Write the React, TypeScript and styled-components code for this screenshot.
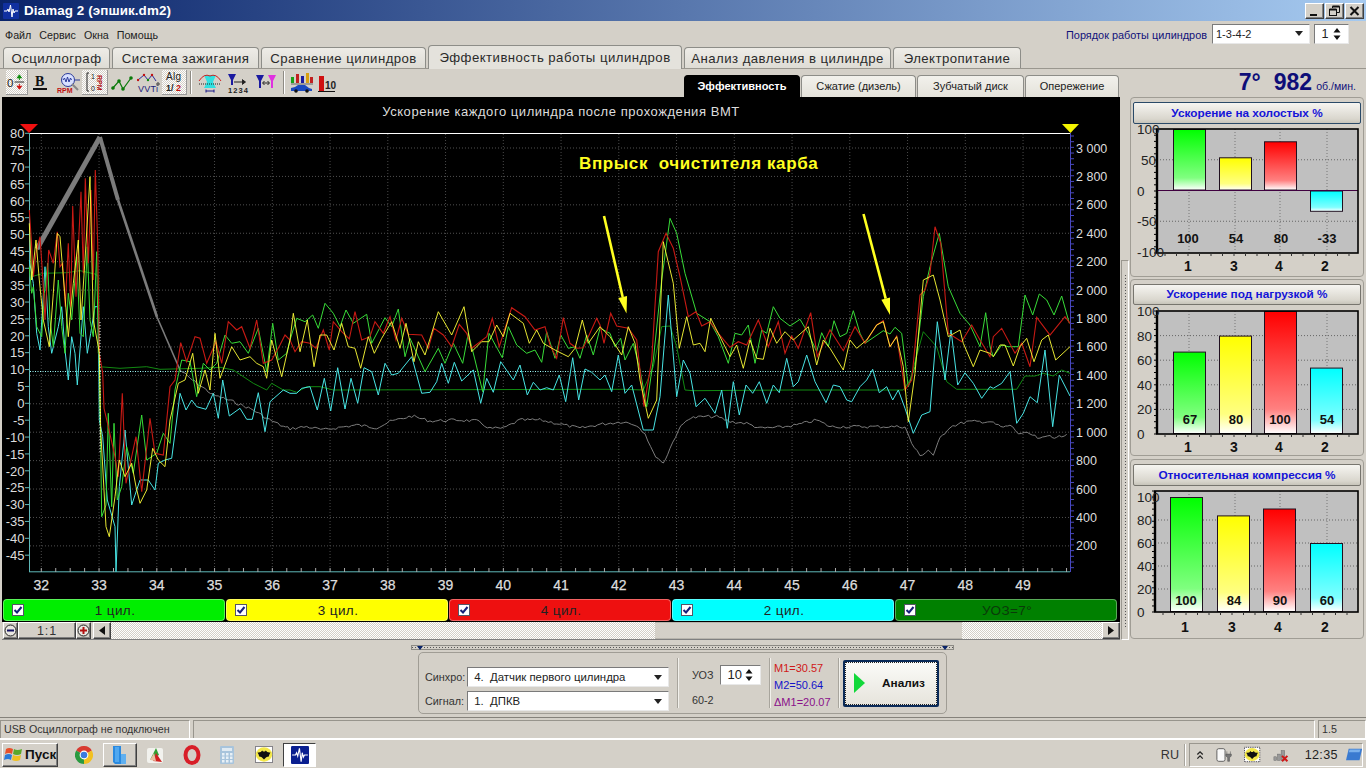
import React from "react";
import styled, { createGlobalStyle, css } from "styled-components";

const FONT = '"Liberation Sans", Arial, sans-serif';
const FACE = "#d4d0c8";

const Global = createGlobalStyle`
  html, body { margin: 0; padding: 0; background: ${FACE}; overflow: hidden; }
  * { box-sizing: border-box; }
`;

const raised = css`
  border: 1px solid;
  border-color: #fff #404040 #404040 #fff;
  box-shadow: inset -1px -1px 0 #808080;
  background: ${FACE};
`;
const dither = css`
  background: repeating-conic-gradient(#fff 0 25%, ${FACE} 0 50%) 0 0 / 2px 2px;
`;

const Page = styled.div`
  width: 1366px; height: 768px; overflow: hidden; display: flex; flex-direction: column;
  background: ${FACE}; font-family: ${FONT}; color: #222;
`;
const TitleBar = styled.div`
  height: 21px; flex: none; display: flex; align-items: center; padding: 0 2px 0 3px;
  background: linear-gradient(90deg, #0a246a 0%, #a6caf0 100%);
`;
const TitleText = styled.div`
  font-size: 13.4px; font-weight: 700; color: #fff; letter-spacing: .1px; white-space: nowrap; flex: 1; margin-left: 5px;
`;
const WinBtn = styled.div`
  ${raised}; width: 19px; height: 16px; display: flex; align-items: center; justify-content: center;
  margin-left: 1px;
`;
const MenuRow = styled.div`
  height: 25px; flex: none; display: flex; align-items: center; padding: 0 17px 0 5px;
`;
const MenuItem = styled.span`
  font-size: 10.7px; color: #222; margin-right: 8px; margin-top: 2px;
`;
const OrderLabel = styled.span`
  margin-left: auto; font-size: 10.9px; color: #10107a; margin-right: 5px; margin-top: 2px;
`;
const Field = styled.div<{ $w: number; $h?: number; $fs?: number; $ml?: number }>`
  width: ${(p) => p.$w}px; height: ${(p) => p.$h ?? 20}px; flex: none; background: #fff;
  border: 1px solid; border-color: #7a7a7a #e8e8e8 #e8e8e8 #7a7a7a;
  font-size: ${(p) => p.$fs ?? 11}px; display: flex; align-items: center; padding: 0 6px 0 3px; color: #222;
  justify-content: space-between; margin-left: ${(p) => p.$ml ?? 0}px;
`;
const TabRow = styled.div`
  height: 23px; flex: none; display: flex; align-items: flex-end; padding-left: 3px; gap: 2px;
  border-bottom: 1px solid #9a978f;
`;
const Tab = styled.div<{ $w: number; $active?: boolean }>`
  width: ${(p) => p.$w}px; height: ${(p) => (p.$active ? 24 : 21)}px; flex: none; text-align: center;
  border: 1px solid #8d8d88; border-bottom: none; border-radius: 4px 4px 0 0;
  background: ${(p) => (p.$active ? "#e4e2dc" : "linear-gradient(#eeece7, #dedcd5)")};
  font-size: 13.2px; letter-spacing: .45px; color: #2a2a2a; line-height: ${(p) => (p.$active ? 24 : 21)}px;
  white-space: nowrap; margin-bottom: ${(p) => (p.$active ? -1 : 0)}px;
`;
const ToolRow = styled.div`
  height: 28px; flex: none; display: flex; align-items: flex-start; padding: 1px 0 0 6px;
  position: relative;
`;
const ToolBtn = styled.div<{ $w: number; $on?: boolean; $ml?: number }>`
  width: ${(p) => p.$w}px; height: 25px; flex: none; display: flex; align-items: center; justify-content: center;
  margin-left: ${(p) => p.$ml ?? 0}px;
  ${(p) => p.$on && dither};
  ${(p) => p.$on && "border-right: 1px solid #999; border-bottom: 1px solid #999;"}
`;
const ToolSep = styled.div<{ $ml: number }>`
  width: 2px; height: 23px; flex: none; margin: 1px 0 0 ${(p) => p.$ml}px;
  background: #8e8b84; border-right: 1px solid #fff;
`;
const SubTabs = styled.div`
  display: flex; gap: 1px; margin: 5px 0 0 347px; flex: none;
`;
const SubTab = styled.div<{ $w: number; $active?: boolean }>`
  width: ${(p) => p.$w}px; height: 22px; flex: none; text-align: center; border-radius: 4px 4px 0 0;
  border: 1px solid ${(p) => (p.$active ? "#000" : "#8d8d88")}; border-bottom: none;
  background: ${(p) => (p.$active ? "#000" : "linear-gradient(#f2f1ec, #e4e2da)")};
  color: ${(p) => (p.$active ? "#fff" : "#222")};
  font-size: 11px; font-weight: ${(p) => (p.$active ? 700 : 400)}; line-height: 21px; white-space: nowrap;
`;
const Readout = styled.div`
  position: absolute; right: 10px; top: 0; height: 27px; display: flex; align-items: center; color: #0e0e78;
`;
const ReadBig = styled.span<{ $mr: number }>`
  font-size: 23px; font-weight: 700; margin-right: ${(p) => p.$mr}px;
`;
const ReadUnit = styled.span`
  font-size: 10.6px; margin-top: 7px; color: #10107a;
`;
const Main = styled.div`
  height: 543px; flex: none; display: flex; padding-left: 2px;
`;
const LeftCol = styled.div`
  width: 1118px; flex: none; display: flex; flex-direction: column;
`;
const BlackPanel = styled.div`
  height: 525px; flex: none; background: #000; display: flex; flex-direction: column;
`;
const ChartSvg = styled.svg`
  display: block; flex: none; overflow: visible;
`;
const Legend = styled.div`
  display: flex; gap: 1px; padding-left: 1px; height: 22px; flex: none;
`;
const Pill = styled.div<{ $bg: string; $fg?: string }>`
  width: 222px; height: 22px; flex: none; background: ${(p) => p.$bg}; border-radius: 4px;
  border: 1px solid rgba(255, 255, 255, .35); display: flex; align-items: center; position: relative;
  color: ${(p) => p.$fg ?? "#222"}; font-size: 13.5px; letter-spacing: .4px; justify-content: center; padding-left: 2px;
`;
const Check = styled.span`
  position: absolute; left: 8px; top: 4px; width: 12px; height: 12px; background: #fff;
  border: 1px solid #556; display: flex; align-items: center; justify-content: center;
`;
const ScrollRow = styled.div`
  height: 18px; flex: none; display: flex; align-items: stretch; border-bottom: 1px solid #808080;
`;
const RoundBtn = styled.div<{ $ml?: number }>`
  ${raised}; width: 15px; flex: none; margin-left: ${(p) => p.$ml ?? 0}px; display: flex; align-items: center; justify-content: center;
`;
const ZoomBtn = styled.div`
  ${raised}; width: 58px; flex: none; font-size: 12.5px; letter-spacing: .8px; text-align: center; line-height: 17px; color: #333;
`;
const ArrowBtn = styled.div<{ $ml?: number }>`
  ${raised}; width: 18px; flex: none; display: flex; align-items: center; justify-content: center;
  margin-left: ${(p) => p.$ml ?? 0}px;
`;
const Track = styled.div<{ $w?: number }>`
  ${dither}; ${(p) => (p.$w ? `width:${p.$w}px;flex:none;` : "flex:1;")}
`;
const Thumb = styled.div`
  width: 307px; flex: none; background: ${FACE};
  border-top: 1px solid #b8b5ad; border-bottom: 1px solid #b8b5ad;
`;
const SplitV = styled.div`
  width: 8px; flex: none; margin: 163px 1px 0 1px; height: 380px; position: relative;
  border: 1px solid #9a978f; border-right-color: #fff; border-bottom-color: #fff; display: flex; justify-content: center;
`;
const SplitDots = styled.div`
  width: 1px; margin: 14px 0 10px; background: repeating-linear-gradient(#555 0 1px, transparent 1px 3px);
`;
const RightCol = styled.div`
  width: 234px; flex: none; display: flex; flex-direction: column;
`;
const Panel = styled.div<{ $h: number; $mt: number }>`
  height: ${(p) => p.$h}px; margin-top: ${(p) => p.$mt}px; flex: none; border: 1px solid #a09d95; border-radius: 4px;
  padding: 4px 2px 0 2px;
`;
const PanelHead = styled.div<{ $focus?: boolean; $h: number }>`
  height: ${(p) => p.$h}px; border-radius: 2px; text-align: center; font-size: 11.8px; font-weight: 700; color: #1414d8;
  background: linear-gradient(#f6f5f1, #d9d6cd 80%, #c7c4ba);
  border: 1px solid ${(p) => (p.$focus ? "#2a4a68" : "#77756e")};
  line-height: ${(p) => p.$h - 2}px; white-space: nowrap;
`;
const Bottom = styled.div`
  height: 78px; flex: none; display: flex; flex-direction: column; align-items: center; padding-top: 5px;
  border-bottom: 1px solid #85827b;
`;
const SplitH = styled.div`
  width: 543px; height: 5px; flex: none; border: 1px solid #8d8b85; position: relative; margin-left: -2px;
  background: repeating-linear-gradient(90deg, #555 0 1px, transparent 1px 3px) center / 100% 1px no-repeat;
`;
const SplitTri = styled.i<{ $side: "left" | "right" }>`
  position: absolute; ${(p) => p.$side}: 5px; top: 0; width: 0; height: 0;
  border: 3px solid transparent; border-top: 4px solid #0a246a; border-bottom: none;
`;
const ControlBox = styled.div`
  width: 529px; height: 62px; margin: 2px 0 0 -1px; flex: none; border: 1px solid #a09d95; border-radius: 5px;
  display: flex; align-items: center; padding-left: 6px;
`;
const SyncGrid = styled.div`
  display: grid; grid-template-columns: 42px 202px; row-gap: 4px; align-items: center; width: 252px; flex: none; margin-top: 12px;
`;
const SmallLabel = styled.span`
  font-size: 10.8px; color: #333;
`;
const VSep = styled.div<{ $h?: number }>`
  width: 2px; height: ${(p) => p.$h ?? 50}px; flex: none; background: #a8a59d; border-right: 1px solid #f2f1ec;
`;
const UozBox = styled.div`
  width: 90px; flex: none; display: grid; grid-template-columns: 28px 42px; row-gap: 9px; align-items: center;
  padding-left: 13px; margin-top: 4px;
`;
const Values = styled.div`
  width: 67px; flex: none; padding-left: 3px; display: flex; flex-direction: column; gap: 3px; margin-top: 3px;
`;
const Val = styled.span<{ $c: string }>`
  font-size: 11px; line-height: 14px; color: ${(p) => p.$c};
`;
const AnalysisBtn = styled.div`
  width: 96px; height: 47px; flex: none; margin-left: 3px; border: 2px solid #0a2a58; border-radius: 2px;
  background: linear-gradient(#fbfbf8, #e6e4dc); display: flex; align-items: center; position: relative;
  outline: 1px dotted #222; outline-offset: -3px; padding-left: 9px; font-size: 11.8px; font-weight: 700; color: #111; gap: 17px;
`;
const StatusBar = styled.div`
  height: 22px; flex: none; display: flex; padding-top: 2px; gap: 3px; border-bottom: 2px solid #fff;
`;
const StatusCell = styled.div<{ $w?: number }>`
  ${(p) => (p.$w ? `width:${p.$w}px;flex:none;` : "flex:1;")}
  height: 18px; border: 1px solid #97948c; border-bottom: none; border-right-color: #fff; font-size: 10.7px; line-height: 17px; padding-left: 3px;
  color: #333;
`;
const Taskbar = styled.div`
  flex: 1; display: flex; align-items: center; padding-top: 1px; position: relative;
`;
const StartBtn = styled.div`
  ${raised}; width: 56px; height: 24px; margin-left: 2px; flex: none; display: flex; align-items: center; padding-left: 1px; gap: 1px;
  font-size: 13.5px; font-weight: 700; color: #111;
`;
const TaskSlot = styled.div<{ $w: number; $ml: number; $state?: "raised" | "active" }>`
  width: ${(p) => p.$w}px; height: 24px; flex: none; margin-left: ${(p) => p.$ml}px; display: flex; align-items: center; justify-content: center;
  ${(p) => p.$state === "raised" && raised};
  ${(p) => p.$state === "active" && "background:#fff;border:1px solid;border-color:#404040 #fff #fff #404040;"}
`;
const TrayLang = styled.span`
  margin-left: auto; font-size: 12.6px; color: #333; margin-right: 5px;
`;
const TraySep = styled.div`
  width: 2px; height: 22px; background: #a8a59d; border-right: 1px solid #fff; margin-right: 3px; flex: none;
`;
const TrayBox = styled.div`
  width: 174px; height: 24px; flex: none; margin-right: 3px; border: 1px solid; border-color: #9a978f #fff #fff #9a978f;
  display: flex; align-items: center; padding-left: 6px; gap: 12px;
`;
const TrayTime = styled.span`
  font-size: 12.6px; color: #222; letter-spacing: .3px; margin-left: 4px; margin-right: -4px; flex: none;
`;

/* ---------- chart data: traced from the reference ---------- */
type P = [number, number];
const p = (ox: number, oy: number, a: number[]): P[] => {
  const r: P[] = [];
  for (let i = 0; i < a.length; i += 2) r.push([ox + a[i] / 3, oy + a[i + 1] / 3]);
  return r;
};
const join = (...parts: P[][]) => {
  const r: P[] = [];
  for (const s of parts) for (const q of s) if (!r.length || q[0] > r[r.length - 1][0]) r.push(q);
  return r;
};
const d = (s: P[]) => s.map((q, i) => (i ? "L" : "M") + q[0].toFixed(1) + " " + q[1].toFixed(1)).join("");
const jitter = (s: P[], amp: number) => {
  const r: P[] = [];
  let seed = 7;
  for (let i = 0; i < s.length - 1; i++) {
    const [a, b] = s[i], [c, e] = s[i + 1];
    const n = Math.max(1, Math.round((c - a) / 2.6));
    for (let k = 0; k < n; k++) {
      seed = (seed * 9301 + 49297) % 233280;
      r.push([a + ((c - a) * k) / n, b + ((e - b) * k) / n + (seed / 233280 - 0.5) * amp]);
    }
  }
  return r;
};

const red = join(
  p(0, 120, [88,270,94,360,100,470,108,400,120,350,128,470,135,600,146,390,160,430,172,335,180,440,188,430,196,560,205,370,212,560,218,258,228,530,243,215,250,460,256,175,265,430,273,210,280,480,286,150,293,370]),
  p(0, 320, [298,100,308,160,312,265,325,320,345,410,355,470,367,220,378,490,395,410,408,350,425,515,450,295,465,400,490,405,510,200,525,180,542,68,560,125,585,50,600,55,620,130,648,65,665,130,685,5,710,30,725,20,750,85,770,0,790,130,815,120,840,75,855,45,870,60]),
  p(290, 285, [0,170,15,200,35,170,60,175,78,190,100,135,118,195,130,110,155,140,178,162,195,80,215,165,240,155,255,110,280,145,300,95,318,165,335,100,355,148,395,150,415,190,432,130,460,150,485,185,508,118,530,145,545,190,590,155,607,100,628,185,645,130,665,68,705,95,735,135,765,125,780,180,800,220,820,98,840,175,860,190,880,188,920,100,930,120]),
  p(590, 200, [0,395,20,355,42,430,62,340,80,378,115,385,140,420,162,620,185,480,205,155,228,100,250,145,270,230,295,350,318,335,335,378,360,365,385,400,420,442,445,425,470,435,505,360,535,440,565,365,585,460,605,408,625,445,662,338,682,470,720,390,760,452,795,380,825,430,860,375,880,362,900,440,920,408,945,570,965,540,990,285,1005,270,1020,220,1035,80,1052,130,1075,400,1115,425,1145,375,1170,420,1200,470]),
  p(960, 130, [100,620,125,595,165,670,185,640,210,710,230,562,270,615,315,560,330,580])
);
const green = join(
  p(0, 120, [88,440,95,520,100,500,110,620,125,650,133,520,143,430,150,600,160,680,175,480,185,620,195,700,205,520,215,600,230,410,240,640,250,650,262,380,270,600,280,650,290,395,295,700]),
  p(0, 320, [298,100,305,590,318,555,325,280,335,560,342,310,352,540,365,500,380,380,400,460,425,285,440,420,470,400,490,340,510,370,525,210,545,120,570,125,590,230,610,130,630,150,650,130,675,45,695,70,720,65,745,100,775,25,800,155,818,10,835,120,860,100,870,60]),
  p(290, 285, [0,165,20,100,45,110,68,90,85,130,105,55,130,85,150,125,168,75,190,115,230,88,245,175,285,98,305,125,325,72,345,215,360,160,405,260,445,190,465,235,490,175,518,235,535,145,555,225,578,320,597,145,637,218,655,125,680,180,710,205,735,195,755,232,770,140,795,220,812,150,835,190,855,185,870,220,890,150,910,210,930,130]),
  p(590, 200, [0,420,10,462,30,375,60,400,75,440,92,415,105,480,130,430,150,510,170,620,190,480,215,240,240,55,260,100,285,220,320,340,360,365,385,410,415,490,435,400,455,405,475,375,495,490,515,390,530,400,550,320,570,355,600,378,630,358,655,400,680,455,695,398,715,440,732,362,750,410,770,400,790,332,810,400,825,430,880,392,900,402,915,382,935,400,955,560,975,500,1000,290,1020,200,1048,100,1075,260,1110,340,1140,375,1170,440,1187,338,1200,440]),
  p(960, 130, [100,680,125,645,145,650,175,650,195,495,218,555,238,492,260,510,282,555,305,498,328,580])
);
const yellow = join(
  p(0, 120, [88,310,95,480,108,360,118,480,130,600,148,680,160,520,172,340,180,350,195,530,205,650,220,490,235,360,243,600,255,420,270,170,280,600,295,680]),
  p(0, 320, [298,100,302,330,318,620,328,650,345,530,358,420,375,470,395,430,408,500,420,550,440,510,458,385,475,420,495,440,510,300,535,190,555,180,578,100,595,220,615,150,630,210,645,40,660,175,695,80,720,120,750,110,770,130,790,140,800,175,815,60,845,170,870,60]),
  p(290, 285, [0,120,10,85,30,200,52,105,72,245,90,150,110,150,132,195,155,115,175,185,195,190,212,250,235,155,253,205,275,160,305,110,330,190,348,115,372,230,385,170,405,210,445,80,485,150,522,65,545,200,575,170,597,170,620,120,640,155,660,85,700,115,718,175,740,135,760,175,795,195,835,215,855,190,877,105,895,175,930,125]),
  p(590, 200, [0,420,30,378,60,410,95,465,115,380,135,430,150,540,175,655,200,600,220,125,250,250,268,445,290,350,310,435,330,430,345,455,362,355,385,400,420,470,440,435,460,505,480,420,500,475,520,478,540,385,560,430,585,395,610,420,655,380,680,495,700,420,720,445,760,510,780,420,800,445,830,420,860,375,880,365,900,440,920,410,940,500,955,665,975,520,1000,240,1030,225,1050,300,1075,410,1110,390,1120,430,1150,500,1170,450,1200,460]),
  p(960, 130, [100,680,120,645,135,645,160,708,180,650,200,625,222,695,245,630,265,615,287,690,330,650])
);
const cyan = join(
  p(0, 120, [88,420,100,490,110,640,120,690,135,440,145,620,155,700,175,620,185,560,195,690,205,780,215,650,225,700,232,795,250,560,262,700,272,640,285,560,295,560]),
  p(0, 320, [298,300,308,350,322,540,345,620,348,755,358,500,375,330,395,555,420,480,445,480,465,510,475,430,495,420,515,415,530,300,540,220,558,270,575,240,590,260,618,268,640,220,655,295,668,180,688,288,720,265,740,298,757,298,775,218,795,335,810,245,850,210,870,220]),
  p(290, 285, [0,325,20,325,35,310,60,305,82,375,103,280,122,378,143,248,165,372,183,280,203,355,222,248,245,260,265,330,285,235,305,270,325,265,365,215,395,325,420,322,440,290,455,235,475,295,493,232,515,288,550,255,572,355,590,280,610,322,632,230,670,285,690,240,712,330,730,292,750,315,770,308,790,315,808,270,827,350,848,218,866,345,885,252,905,262,930,285]),
  p(590, 200, [0,515,25,540,45,525,65,575,85,465,105,580,125,555,160,690,190,690,210,590,235,285,260,590,280,480,300,520,318,620,345,595,375,640,395,570,412,685,430,545,448,645,468,555,488,580,508,545,530,610,550,555,568,578,590,475,610,560,625,545,650,465,675,545,708,608,730,555,750,560,770,600,785,605,810,560,830,540,848,508,868,578,890,560,908,600,925,570,945,625,970,700,995,645,1020,635,1042,365,1065,540,1083,390,1103,555,1125,518,1150,550,1175,595,1200,560]),
  p(960, 130, [100,775,125,760,150,725,170,880,190,850,210,800,232,818,255,660,278,890,298,735,330,798])
);
const dark = join(
  p(0, 120, [95,470,130,460,200,458,240,452,285,462,296,470]),
  p(0, 320, [298,140,360,145,440,140,480,148,600,145,660,142,700,150,760,190,800,210,815,190,850,210,870,210]),
  p(290, 285, [0,325,20,322,50,305,90,305,110,310,130,315,930,313]),
  p(590, 200, [100,568,160,570,190,500,215,380,240,378,260,440,285,570,310,572,600,570,900,570,940,570,960,540,1000,395,1040,440,1070,545,1100,568,1200,568]),
  p(960, 130, [100,778,170,778,195,738,225,738,250,730,280,738,305,720,330,730])
);
const grayLine = jitter(join(
  p(0, 320, [540,150,570,175,640,225,700,245,760,270,800,295,850,320,870,326]),
  p(290, 285, [0,430,50,425,100,435,130,430,200,420,260,428,300,410,365,393,420,408,500,405,560,408,600,430,640,430,690,405,750,405,800,415,870,430,930,418]),
  p(590, 200, [30,680,100,665,140,675,165,700,190,760,220,790,240,745,265,690,295,655,340,650,380,650,420,665,470,670,510,685,570,682,620,675,680,660,720,680,800,680,880,680,945,680,965,730,990,768,1015,750,1030,765,1050,715,1080,680,1130,665,1200,665]),
  p(960, 130, [100,880,130,893,150,885,175,910,210,912,240,928,270,915,290,925,320,910,330,920])
), 3);

const Y0 = 403.3, YK = 3.375;
const yLabels = Array.from({ length: 26 }, (_, i) => 80 - i * 5);
const rpmLabels = Array.from({ length: 15 }, (_, i) => 3000 - i * 200);
const rpmY = (r: number) => 148 + (3000 - r) * 0.1421;
const xOf = (t: number) => 41.3 + (t - 32) * 57.75;
const xLabels = Array.from({ length: 18 }, (_, i) => 32 + i);
const fmtRpm = (r: number) => (r >= 1000 ? `${Math.floor(r / 1000)} ${String(r % 1000).padStart(3, "0")}` : String(r));

const Arrow = ({ x1, y1, x2, y2 }: { x1: number; y1: number; x2: number; y2: number }) => {
  const L = Math.hypot(x2 - x1, y2 - y1);
  const ux = (x2 - x1) / L, uy = (y2 - y1) / L;
  const bx = x2 - ux * 17, by = y2 - uy * 17;
  return (
    <g>
      <line x1={x1} y1={y1} x2={bx} y2={by} stroke="#ffff20" strokeWidth={2.6} />
      <polygon points={`${x2},${y2} ${bx - uy * 4.5},${by + ux * 4.5} ${bx + uy * 4.5},${by - ux * 4.5}`} fill="#ffff20" />
    </g>
  );
};

const tickRange = (a: number, b: number, s: number) => {
  const r: number[] = [];
  for (let v = a; v <= b + 0.01; v += s) r.push(v);
  return r;
};

const MainChart = () => (
  <ChartSvg width={1118} height={502} viewBox="2 97 1118 502" fontFamily={FONT}>
    <rect x={2} y={97} width={1118} height={502} fill="#000" />
    <text x={561} y={115.5} fill="#ddd" fontSize={13} letterSpacing={0.55} textAnchor="middle">
      Ускорение каждого цилиндра после прохождения ВМТ
    </text>
    {rpmLabels.map((r) => (
      <line key={r} x1={30} x2={1070} y1={rpmY(r)} y2={rpmY(r)} stroke="#505050" strokeDasharray="1 2" />
    ))}
    {xLabels.map((t) => (
      <line key={t} x1={xOf(t)} x2={xOf(t)} y1={134} y2={571} stroke="#4a4a4a" strokeDasharray="1 2" />
    ))}
    <line x1={29} x2={1070} y1={133.5} y2={133.5} stroke="#fff" strokeWidth={1.2} />
    <line x1={30} x2={1070} y1={371.5} y2={371.5} stroke="#a0ffff" strokeDasharray="1 1.5" />
    <line x1={29.5} x2={29.5} y1={133} y2={572} stroke="#5fb8b8" />
    <line x1={29} x2={1070} y1={571.8} y2={571.8} stroke="#5fb8b8" />
    <line x1={1070.5} x2={1070.5} y1={133} y2={572} stroke="#4848c0" />
    {tickRange(136, 570, 5.68).map((y) => (
      <line key={y} x1={1070} x2={1074} y1={y} y2={y} stroke="#4848c0" />
    ))}
    {yLabels.map((v) => (
      <line key={v} x1={25} x2={29} y1={Y0 - v * YK} y2={Y0 - v * YK} stroke="#5fb8b8" />
    ))}
    {tickRange(41.3, 1068, 14.44).map((x) => (
      <line key={x} x1={x} x2={x} y1={568} y2={572} stroke="#aaa" />
    ))}
    <polygon points="20,124 38,124 29,133" fill="#f01010" />
    <polygon points="1062,124 1079,124 1070.5,133" fill="#f4f400" />

    <path d="M37 249L100 137" stroke="#7c7c7c" strokeWidth={5} fill="none" />
    <path d="M100 137L118 200" stroke="#7c7c7c" strokeWidth={4} fill="none" />
    <path d="M118 200L157 317" stroke="#7c7c7c" strokeWidth={2.6} fill="none" />
    <path d="M157 317L180 370" stroke="#7c7c7c" strokeWidth={1.6} fill="none" />
    <path d={d(grayLine)} stroke="#7c7c7c" strokeWidth={1} fill="none" />
    <path d={d(dark)} stroke="#128a12" strokeWidth={1} fill="none" />
    <path d={d(cyan)} stroke="#48e4e4" strokeWidth={1} fill="none" />
    <path d={d(green)} stroke="#38dc38" strokeWidth={1} fill="none" />
    <path d={d(red)} stroke="#c81a14" strokeWidth={1.1} fill="none" />
    <path d={d(yellow)} stroke="#ffff38" strokeWidth={0.9} fill="none" />
    <line x1={100} x2={100} y1={322} y2={452} stroke="#eee" strokeDasharray="1 2" />

    <Arrow x1={604} y1={216} x2={626.5} y2={313.5} />
    <Arrow x1={863.5} y1={214} x2={890} y2={315} />
    <text x={579} y={169} fill="#ffff20" fontSize={17} fontWeight={700} xmlSpace="preserve" letterSpacing={0.6}>
      Впрыск  очистителя карба
    </text>

    {yLabels.map((v) => (
      <text key={v} x={24.5} y={Y0 - v * YK + 4.7} fill="#ddd" fontSize={13} textAnchor="end">{v}</text>
    ))}
    {rpmLabels.map((r) => (
      <text key={r} x={1076} y={rpmY(r) + 4.5} fill="#ddd" fontSize={12.5}>{fmtRpm(r)}</text>
    ))}
    {xLabels.map((t) => (
      <text key={t} x={xOf(t)} y={590} fill="#ddd" fontSize={14} textAnchor="middle" stroke="#ddd" strokeWidth={0.25}>{t}</text>
    ))}
  </ChartSvg>
);

/* ---------- bar charts ---------- */
type Kind = "g" | "y" | "r" | "c";
type Bar = { v: number; x: number; n: string; lx: number; ax: number; kind: Kind };
type BarCfg = {
  id: string; y0: number; h: number; left: number; top: number; bottom: number; zero: number; k: number;
  ticks: { v: number; x?: number }[]; grid: number[]; vy: number; ay: number; bars: Bar[];
};
const gradStops: Record<Kind, [string, string]> = {
  g: ["#00ff00", "#80ff80"], y: ["#ffff00", "#ffff80"], r: ["#ff0000", "#ff8080"], c: ["#00ffff", "#80ffff"],
};

const BarChart = ({ c }: { c: BarCfg }) => {
  const yOf = (v: number) => c.zero - v * c.k;
  return (
    <ChartSvg width={228} height={c.h} viewBox={`1133 ${c.y0} 228 ${c.h}`} fontFamily={FONT}>
      <defs>
        {(Object.keys(gradStops) as Kind[]).map((k) => (
          <linearGradient id={`${c.id}${k}`} key={k} x1={0} y1={0} x2={0} y2={1}>
            <stop offset="0" stopColor={gradStops[k][0]} />
            <stop offset="0.8" stopColor={gradStops[k][1]} />
            <stop offset="1" stopColor="#fff" />
          </linearGradient>
        ))}
      </defs>
      <rect x={c.left} y={c.top} width={1358 - c.left} height={c.bottom - c.top} fill="#c0c0c0" />
      {c.grid.map((v) => (
        <line key={v} x1={c.left} x2={1358} y1={yOf(v)} y2={yOf(v)} stroke="#666" strokeDasharray="1 2" />
      ))}
      {[1189, 1235, 1280, 1327].map((x) => (
        <line key={x} x1={x} x2={x} y1={c.top} y2={c.bottom} stroke="#777" strokeDasharray="1 2" />
      ))}
      {c.bars.map((b) => {
        const top = b.v >= 0 ? yOf(b.v) : c.zero;
        const h = Math.abs(b.v) * c.k - (b.v >= 0 ? 1 : 0);
        return <rect key={b.x} x={b.x + 0.5} y={top + 0.5} width={32} height={h} fill={`url(#${c.id}${b.kind})`} stroke="#201020" />;
      })}
      {c.zero < c.bottom - 2 && <line x1={c.left} x2={1358} y1={c.zero} y2={c.zero} stroke="#400040" />}
      <rect x={c.left} y={c.top} width={1358 - c.left} height={c.bottom - c.top} fill="none" stroke="#000" strokeWidth={1.6} />
      <line x1={c.left} x2={c.left} y1={c.top} y2={c.bottom} stroke="#000" strokeWidth={2.4} />
      {tickRange(c.top, c.bottom, (c.bottom - c.top) / 20).map((y) => (
        <line key={y} x1={c.left - 3} x2={c.left} y1={y} y2={y} stroke="#000" />
      ))}
      {tickRange(c.left + 8, 1356, 11.5).map((x) => (
        <line key={x} x1={x} x2={x} y1={c.bottom} y2={c.bottom + 3} stroke="#333" />
      ))}
      {c.ticks.map((t) => (
        <text key={t.v} x={t.x ?? 1137} y={yOf(t.v) + 5} fontSize={13.5} fill="#222">{t.v}</text>
      ))}
      {c.bars.map((b) => (
        <text key={b.x} x={b.lx} y={c.vy} fontSize={13} fontWeight={700} fill="#111" textAnchor="middle">{b.v}</text>
      ))}
      {c.bars.map((b) => (
        <text key={b.x} x={b.ax} y={c.ay} fontSize={14} fontWeight={700} fill="#111" textAnchor="middle">{b.n}</text>
      ))}
    </ChartSvg>
  );
};

const mk = (v: number, x: number, n: string, lx: number, ax: number, kind: Kind): Bar => ({ v, x, n, lx, ax, kind });

const chart1: BarCfg = {
  id: "a", y0: 125, h: 150, left: 1157, top: 130, bottom: 254, zero: 191.5, k: 0.615,
  ticks: [{ v: 100 }, { v: 50, x: 1141 }, { v: 0 }, { v: -50 }, { v: -100 }], grid: [50, -50], vy: 244, ay: 272,
  bars: [mk(100, 1173, "1", 1188, 1188, "g"), mk(54, 1219, "3", 1236, 1234, "y"), mk(80, 1264, "4", 1281, 1279, "r"), mk(-33, 1310, "2", 1327, 1325, "c")],
};
const chart2: BarCfg = {
  id: "b", y0: 306, h: 149, left: 1157, top: 312, bottom: 435, zero: 435, k: 1.23,
  ticks: [{ v: 100 }, { v: 80 }, { v: 60 }, { v: 40 }, { v: 20 }, { v: 0 }], grid: [80, 60, 40, 20], vy: 425, ay: 453,
  bars: [mk(67, 1173, "1", 1190, 1188, "g"), mk(80, 1219, "3", 1236, 1234, "y"), mk(100, 1264, "4", 1280, 1279, "r"), mk(54, 1310, "2", 1327, 1325, "c")],
};
const chart3: BarCfg = {
  id: "c", y0: 487, h: 150, left: 1155, top: 492, bottom: 613, zero: 613, k: 1.15,
  ticks: [{ v: 100 }, { v: 80 }, { v: 60 }, { v: 40 }, { v: 20 }, { v: 0 }], grid: [80, 60, 40, 20], vy: 606, ay: 633,
  bars: [mk(100, 1170, "1", 1186, 1185, "g"), mk(84, 1217, "3", 1234, 1232, "y"), mk(90, 1263, "4", 1280, 1278, "r"), mk(60, 1310, "2", 1327, 1325, "c")],
};

/* ---------- icons ---------- */
const S = ({ w = 24, h = 22, children }: { w?: number; h?: number; children: React.ReactNode }) => (
  <svg width={w} height={h} viewBox={`0 0 ${w} ${h}`} fontFamily={FONT}>{children}</svg>
);
const IconZero = () => (
  <S w={22}>
    <text x={1} y={16} fontSize={12} fill="#222">0</text>
    <path d="M9 11h10" stroke="#222" />
    <path d="M14 9V5M11.5 7L14 3.5 16.5 7" fill="#0a8a0a" stroke="#0a8a0a" />
    <path d="M14 13v4M11.5 15L14 18.5 16.5 15" fill="#d01010" stroke="#d01010" />
  </S>
);
const IconB = () => (
  <S w={24}>
    <text x={5} y={14} fontSize={14} fontWeight={700} fontFamily='"Liberation Serif", serif' fill="#111">B</text>
    <rect x={3} y={16} width={14} height={2} fill="#111" />
  </S>
);
const IconRpm = () => (
  <S w={26}>
    <circle cx={12} cy={8} r={6.5} fill="#d8e0ff" stroke="#2a3a9a" />
    <path d="M7 8l1.5-2 1.5 4 1.5-5 1.5 5 1.5-4 1 2" stroke="#2a3a9a" fill="none" />
    <path d="M19 8h5" stroke="#2a3a9a" />
    <path d="M16 12l6 6" stroke="#888" strokeWidth={2} />
    <text x={1} y={21} fontSize={7} fontWeight={700} fill="#c01010">RPM</text>
  </S>
);
const IconBracket = () => (
  <S w={24}>
    <path d="M6 2H4v18h2" stroke="#222" fill="none" />
    <text x={8} y={8} fontSize={7} fill="#222">1</text>
    <text x={8} y={20} fontSize={7} fill="#222">0</text>
    <text x={14} y={4} fontSize={7} fontWeight={700} fill="#b01010" transform="rotate(90 14 4)">RPM</text>
  </S>
);
const IconZig = () => (
  <S w={24}>
    <path d="M2 17L9 9 13 17 21 6" stroke="#0a7a0a" strokeWidth={1.2} fill="none" />
    {[[3, 16], [9, 9], [13, 17], [21, 6]].map(([x, y]) => <circle key={x} cx={x} cy={y} r={1.8} fill="#0a7a0a" />)}
  </S>
);
const IconVvti = () => (
  <S w={24}>
    <path d="M1 8L7 3 11 8 15 3 19 9" stroke="#2a2a9a" fill="none" />
    {[[1, 8], [7, 3], [15, 3]].map(([x, y]) => <circle key={x} cx={x} cy={y} r={1.2} fill="#c01010" />)}
    <circle cx={11} cy={8} r={1.2} fill="#0a8a0a" /><circle cx={21} cy={12} r={1.2} fill="none" stroke="#333" />
    <text x={1} y={20} fontSize={9} fill="#1a1a7a" textLength={20}>VVTi</text>
  </S>
);
const IconAlg = () => (
  <S w={22}>
    <text x={3} y={9} fontSize={10} fill="#222" textLength={15}>Alg</text>
    <text x={3} y={20} fontSize={9} fontWeight={700} fill="#222">1/</text>
    <text x={13} y={20} fontSize={9} fontWeight={700} fill="#c01010">2</text>
  </S>
);
const IconCyan = () => (
  <S w={24}>
    <path d="M6 3h12l-3 7 3 6H6l3-6z" fill="#30e0e0" />
    <path d="M1 9Q6 1 12 4M23 9Q18 1 12 4" stroke="#d02020" fill="none" />
    <path d="M1 12h22" stroke="#222" strokeDasharray="1 1" />
    <path d="M8 19h8M8 17.5v3M16 17.5v3" stroke="#1a1a8a" />
  </S>
);
const IconFunnel = () => (
  <S w={24}>
    <path d="M2 2h8L7 8v5H5V8z" fill="#1a1aa0" />
    <path d="M8 10h11M16 7.5L19.5 10 16 12.5" stroke="#222" fill="#222" />
    <text x={2} y={21} fontSize={7.5} fontWeight={700} fill="#222" textLength={20}>1234</text>
  </S>
);
const IconFunnels = () => (
  <S w={22}>
    <path d="M1 3h8L6 9v7H4V9z" fill="#1a1aa0" />
    <path d="M13 3h8l-3 6v7h-2V9z" fill="#e030e0" />
    <path d="M8 11h6M9.5 9L7.5 11 9.5 13M12.5 9l2 2-2 2" stroke="#222" fill="none" />
  </S>
);
const IconCar = () => (
  <S w={24}>
    {([[1, "#18a018", 6], [6, "#c02020", 9], [11, "#1a1aa0", 7], [16, "#d8a010", 10], [20, "#c02020", 6]] as [number, string, number][]).map(([x, c, h]) => (
      <rect key={x} x={x} y={11 - h} width={3} height={h} fill={c} />
    ))}
    <path d="M1 12h22" stroke="#666" />
    <path d="M1 19v-3l4-1 3-2h7l4 3 3 1v2z" fill="#1a4ac0" />
    <circle cx={6} cy={19} r={1.8} fill="#111" /><circle cx={17} cy={19} r={1.8} fill="#111" />
  </S>
);
const IconTen = () => (
  <S w={20}>
    <rect x={2} y={4} width={5} height={15} fill="#d01010" />
    <rect x={1} y={19} width={17} height={1} fill="#111" />
    <text x={8} y={17} fontSize={10} fontWeight={700} fill="#222">10</text>
  </S>
);
const WaveLogo = ({ s = 16, bg = "#1030a0" }: { s?: number; bg?: string }) => (
  <svg width={s} height={s} viewBox="0 0 16 16">
    <rect width={16} height={16} rx={1} fill={bg} />
    <path d="M1 8h3l1-2 1 3 1.5-7 1.5 12 1-8 1 4 1-2h3" stroke="#fff" fill="none" strokeWidth={1} />
  </svg>
);
const WinIcon = ({ type }: { type: "min" | "restore" | "close" }) => (
  <svg width={13} height={12} viewBox="0 0 13 12">
    {type === "min" && <rect x={2} y={9} width={7} height={2} fill="#111" />}
    {type === "restore" && (
      <g fill="none" stroke="#111">
        <path d="M4.5 3V1.5h7v6H9" /><path d="M4.5 1.5h7" strokeWidth={2} />
        <rect x={1.5} y={4.5} width={7} height={6} /><path d="M1.5 4.5h7" strokeWidth={2} />
      </g>
    )}
    {type === "close" && <path d="M2.5 2l8 8M10.5 2l-8 8" stroke="#111" strokeWidth={2} />}
  </svg>
);
const Caret = () => (
  <svg width={8} height={5} viewBox="0 0 8 5"><path d="M0 0h8L4 5z" fill="#222" /></svg>
);
const SpinBtns = () => (
  <svg width={10} height={14} viewBox="0 0 10 14">
    <path d="M5 1l3.5 4.5h-7zM5 13L1.5 8.5h7z" fill="#111" />
  </svg>
);
const CheckMark = () => (
  <svg width={10} height={10} viewBox="0 0 10 10"><path d="M1.5 5l2.5 2.5L8.5 2" stroke="#16207a" strokeWidth={2} fill="none" /></svg>
);
const Tri = ({ left }: { left?: boolean }) => (
  <svg width={6} height={9} viewBox="0 0 6 9">
    <path d={left ? "M6 0v9L0 4.5z" : "M0 0v9l6-4.5z"} fill="#111" />
  </svg>
);
const CircleBtn = ({ plus }: { plus?: boolean }) => (
  <svg width={13} height={13} viewBox="0 0 13 13">
    <circle cx={6.5} cy={6.5} r={5.5} fill="#e8e6e0" stroke="#222" />
    <path d="M3 6.5h7" stroke={plus ? "#b01010" : "#101060"} strokeWidth={2} />
    {plus && <path d="M6.5 3v7" stroke="#b01010" strokeWidth={2} />}
  </svg>
);
const StartLogo = () => (
  <svg width={20} height={18} viewBox="0 0 20 18">
    <path d="M2 3Q5 1 9 3L8 8Q5 6 1 8z" fill="#e8502a" />
    <path d="M10 3Q13 5 18 3L17 8Q13 10 9 8z" fill="#5aa82a" />
    <path d="M1 9Q5 7 8 9L7 14Q4 12 0 14z" fill="#2a7ad8" />
    <path d="M9 9Q13 11 17 9L16 14Q12 16 8 14z" fill="#f0c020" />
  </svg>
);
const Chrome = () => (
  <svg width={18} height={18} viewBox="0 0 18 18">
    <path d="M9 9L1.2 4.5A9 9 0 0 1 16.8 4.5z" fill="#d83a30" />
    <path d="M9 9L16.8 4.5A9 9 0 0 1 9 18z" fill="#f2c020" />
    <path d="M9 9V18A9 9 0 0 1 1.2 4.5z" fill="#2a9a40" />
    <circle cx={9} cy={9} r={4.4} fill="#fff" /><circle cx={9} cy={9} r={3.3} fill="#3a7ae0" />
  </svg>
);
const Files = () => (
  <svg width={18} height={20} viewBox="0 0 18 20">
    <path d="M2 1h8v18H4l-2-2z" fill="#2a8ae0" /><rect x={10} y={9} width={5} height={10} fill="#60b0f0" />
    <rect x={4} y={2} width={4} height={15} fill="#50a8f0" />
  </svg>
);
const Pie = () => (
  <svg width={18} height={18} viewBox="0 0 18 18">
    <rect x={1} y={2} width={16} height={15} rx={2} fill="#f2f2ee" />
    <path d="M4 14L10 2l3 7z" fill="#30a030" /><path d="M10 7l6 9-9-1z" fill="#d02020" />
    <path d="M4 14L8 7l2 8z" fill="#e8c0a0" />
  </svg>
);
const Opera = () => (
  <svg width={18} height={20} viewBox="0 0 18 20">
    <ellipse cx={9} cy={10} rx={6.5} ry={8} fill="none" stroke="#d81e28" strokeWidth={4} />
  </svg>
);
const Calc = () => (
  <svg width={14} height={18} viewBox="0 0 14 18">
    <rect width={14} height={18} rx={1} fill="#a8c4dc" />
    <rect x={2} y={2} width={10} height={3} fill="#e0eaf2" />
    {[7, 10.5, 14].map((y) => [2, 6, 10].map((x) => <rect key={`${x}${y}`} x={x} y={y} width={2.5} height={2.5} fill="#e8f0f6" />))}
  </svg>
);
const Bat = () => (
  <svg width={18} height={17} viewBox="0 0 18 17">
    <rect x={0.5} y={0.5} width={17} height={16} fill="#fff" stroke="#223" strokeDasharray="1 1" />
    <ellipse cx={9} cy={8.5} rx={8.2} ry={7.2} fill="#f4e84a" />
    <path d="M2.5 6.5Q6 7 7.2 4.5L8 5.6h2l.8-1.1Q12 7 15.5 6.5 13.8 9 14 10.5 11.8 9.8 9 13.5 6.2 9.8 4 10.5 4.2 9 2.5 6.5z" fill="#111" />
  </svg>
);
const Plug = () => (
  <svg width={18} height={18} viewBox="0 0 18 18">
    <rect x={1} y={2} width={9} height={14} rx={2} fill="#fafafa" stroke="#555" />
    <path d="M12 5v3M16 5v3M11 8h6v2l-2 2v4h-2v-4l-2-2z" fill="#777" stroke="#555" strokeWidth={0.6} />
  </svg>
);
const Signal = () => (
  <svg width={18} height={18} viewBox="0 0 18 18">
    <rect x={1} y={11} width={3} height={4} fill="#999" stroke="#666" strokeWidth={0.5} />
    <rect x={5} y={8} width={3} height={7} fill="#999" stroke="#666" strokeWidth={0.5} />
    <rect x={9} y={4} width={4} height={11} fill="#999" stroke="#666" strokeWidth={0.5} />
    <path d="M10 10l6 6M16 10l-6 6" stroke="#d01818" strokeWidth={2.2} />
  </svg>
);
const Chevrons = () => (
  <svg width={9} height={10} viewBox="0 0 9 10">
    <path d="M1.5 4.5L4.5 1.5l3 3M1.5 9L4.5 6l3 3" stroke="#222" strokeWidth={1.4} fill="none" />
  </svg>
);
const Desktop = () => (
  <svg width={18} height={15} viewBox="0 0 18 15">
    <path d="M3 1h15l-3 13H0z" fill="#3a7ad0" /><path d="M4 2h12l-1 3H3z" fill="#7ab0ec" />
  </svg>
);

const TABS: [string, number, boolean?][] = [
  ["Осциллограф", 107], ["Система зажигания", 147], ["Сравнение цилиндров", 165],
  ["Эффективность работы цилиндров", 254, true], ["Анализ давления в цилиндре", 207], ["Электропитание", 128],
];
const SUBTABS: [string, number, boolean?][] = [["Эффективность", 116, true], ["Сжатие (дизель)", 115], ["Зубчатый диск", 107], ["Опережение", 94]];
const LEGEND: [string, string, string?][] = [
  ["1 цил.", "#00ee00"], ["3 цил.", "#ffff00"], ["4 цил.", "#ee1010"], ["2 цил.", "#00ffff"], ["УОЗ=7°", "#008000", "#0a3a0a"],
];

export default function App() {
  return (
    <Page>
      <Global />
      <TitleBar>
        <WaveLogo />
        <TitleText>Diamag 2 (эпшик.dm2)</TitleText>
        <WinBtn><WinIcon type="min" /></WinBtn>
        <WinBtn><WinIcon type="restore" /></WinBtn>
        <WinBtn><WinIcon type="close" /></WinBtn>
      </TitleBar>
      <MenuRow>
        {["Файл", "Сервис", "Окна", "Помощь"].map((m) => <MenuItem key={m}>{m}</MenuItem>)}
        <OrderLabel>Порядок работы цилиндров</OrderLabel>
        <Field $w={98} $fs={11}>1-3-4-2<Caret /></Field>
        <Field $w={35} $fs={12.5} $ml={4}>&nbsp;1<SpinBtns /></Field>
      </MenuRow>
      <TabRow>
        {TABS.map(([t, w, a]) => <Tab key={t} $w={w} $active={a}>{t}</Tab>)}
      </TabRow>
      <ToolRow>
        <ToolBtn $w={22} $on><IconZero /></ToolBtn>
        <ToolBtn $w={28}><IconB /></ToolBtn>
        <ToolBtn $w={26}><IconRpm /></ToolBtn>
        <ToolBtn $w={26} $on><IconBracket /></ToolBtn>
        <ToolBtn $w={27}><IconZig /></ToolBtn>
        <ToolBtn $w={27}><IconVvti /></ToolBtn>
        <ToolBtn $w={25} $on><IconAlg /></ToolBtn>
        <ToolSep $ml={3} />
        <ToolBtn $w={24} $ml={6}><IconCyan /></ToolBtn>
        <ToolBtn $w={24} $ml={4}><IconFunnel /></ToolBtn>
        <ToolBtn $w={22} $ml={5}><IconFunnels /></ToolBtn>
        <ToolSep $ml={6} />
        <ToolBtn $w={24} $ml={5}><IconCar /></ToolBtn>
        <ToolBtn $w={20} $ml={3}><IconTen /></ToolBtn>
        <SubTabs>
          {SUBTABS.map(([t, w, a]) => <SubTab key={t} $w={w} $active={a}>{t}</SubTab>)}
        </SubTabs>
        <Readout>
          <ReadBig $mr={13}>7°</ReadBig>
          <ReadBig $mr={4}>982</ReadBig>
          <ReadUnit>об./мин.</ReadUnit>
        </Readout>
      </ToolRow>
      <Main>
        <LeftCol>
          <BlackPanel>
            <MainChart />
            <Legend>
              {LEGEND.map(([t, bg, fg]) => (
                <Pill key={t} $bg={bg} $fg={fg}>
                  <Check><CheckMark /></Check>{t}
                </Pill>
              ))}
            </Legend>
          </BlackPanel>
          <ScrollRow>
            <RoundBtn $ml={1}><CircleBtn /></RoundBtn>
            <ZoomBtn>1:1</ZoomBtn>
            <RoundBtn><CircleBtn plus /></RoundBtn>
            <ArrowBtn $ml={2}><Tri left /></ArrowBtn>
            <Track $w={544} />
            <Thumb />
            <Track />
            <ArrowBtn><Tri /></ArrowBtn>
          </ScrollRow>
        </LeftCol>
        <SplitV><SplitDots /></SplitV>
        <RightCol>
          <Panel $h={180} $mt={0}>
            <PanelHead $focus $h={22}>Ускорение на холостых %</PanelHead>
            <BarChart c={chart1} />
          </Panel>
          <Panel $h={177} $mt={2}>
            <PanelHead $h={21}>Ускорение под нагрузкой %</PanelHead>
            <BarChart c={chart2} />
          </Panel>
          <Panel $h={180} $mt={3}>
            <PanelHead $h={22}>Относительная компрессия %</PanelHead>
            <BarChart c={chart3} />
          </Panel>
        </RightCol>
      </Main>
      <Bottom>
        <SplitH>
          <SplitTri $side="left" />
          <SplitTri $side="right" />
        </SplitH>
        <ControlBox>
          <SyncGrid>
            <SmallLabel>Синхро:</SmallLabel>
            <Field $w={202} $fs={11.4}>&nbsp;4.&nbsp; Датчик первого цилиндра<Caret /></Field>
            <SmallLabel>Сигнал:</SmallLabel>
            <Field $w={202} $fs={11.4}>&nbsp;1.&nbsp; ДПКВ<Caret /></Field>
          </SyncGrid>
          <VSep />
          <UozBox>
            <SmallLabel>УОЗ</SmallLabel>
            <Field $w={41} $fs={13}>&nbsp;10<SpinBtns /></Field>
            <SmallLabel>60-2</SmallLabel>
          </UozBox>
          <VSep />
          <Values>
            <Val $c="#d01818">M1=30.57</Val>
            <Val $c="#1414c8">M2=50.64</Val>
            <Val $c="#8a108a">ΔM1=20.07</Val>
          </Values>
          <VSep />
          <AnalysisBtn>
            <svg width={11} height={20} viewBox="0 0 11 20"><path d="M0 0l11 10L0 20z" fill="#12d83a" /></svg>
            Анализ
          </AnalysisBtn>
        </ControlBox>
      </Bottom>
      <StatusBar>
        <StatusCell $w={190}>USB Осциллограф не подключен</StatusCell>
        <StatusCell />
        <StatusCell $w={48}>1.5</StatusCell>
      </StatusBar>
      <Taskbar>
        <StartBtn><StartLogo />Пуск</StartBtn>
        <TaskSlot $w={20} $ml={16}><Chrome /></TaskSlot>
        <TaskSlot $w={34} $ml={9} $state="raised"><Files /></TaskSlot>
        <TaskSlot $w={20} $ml={8}><Pie /></TaskSlot>
        <TaskSlot $w={20} $ml={17}><Opera /></TaskSlot>
        <TaskSlot $w={20} $ml={15}><Calc /></TaskSlot>
        <TaskSlot $w={20} $ml={17}><Bat /></TaskSlot>
        <TaskSlot $w={33} $ml={9} $state="active"><WaveLogo s={18} bg="#0a1f90" /></TaskSlot>
        <TrayLang>RU</TrayLang>
        <TraySep />
        <TrayBox>
          <Chevrons />
          <Plug />
          <Bat />
          <Signal />
          <TrayTime>12:35</TrayTime>
          <Desktop />
        </TrayBox>
      </Taskbar>
    </Page>
  );
}
